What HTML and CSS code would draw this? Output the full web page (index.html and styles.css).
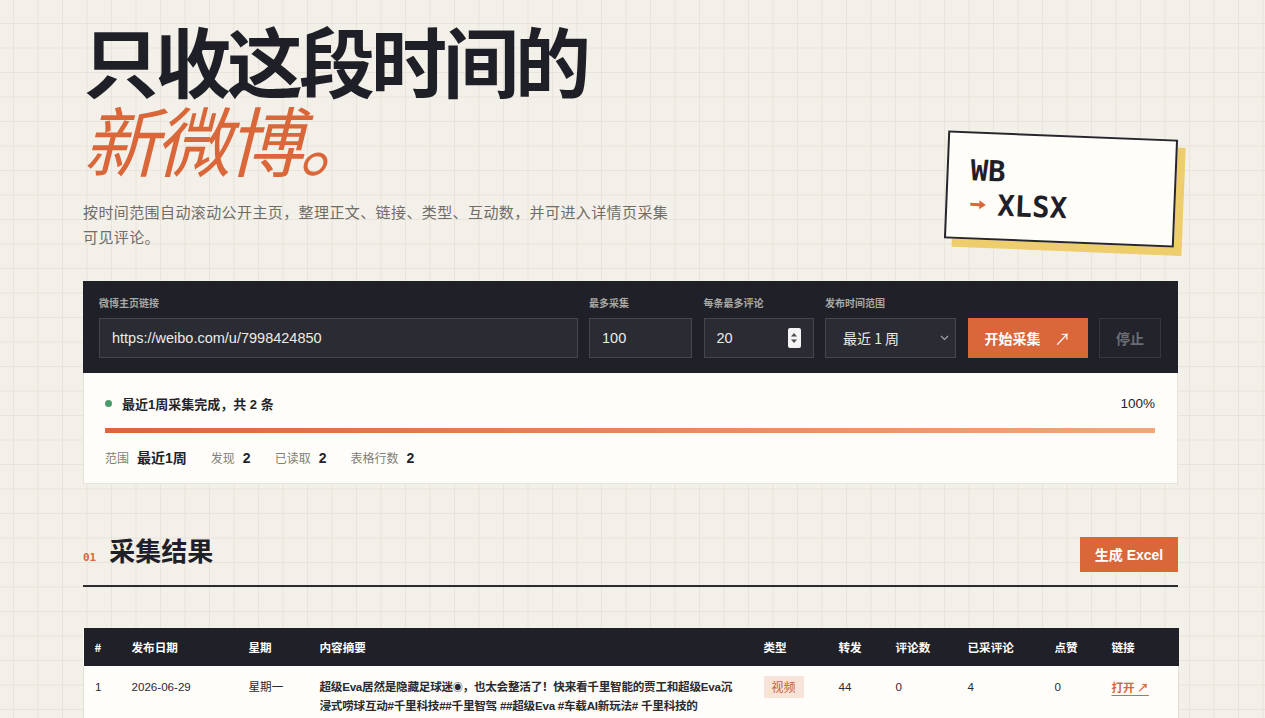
FILE: index.html
```html
<!DOCTYPE html>
<html lang="zh-CN">
<head>
<meta charset="utf-8">
<title>WB → XLSX 微博采集</title>
<link rel="stylesheet" href="styles.css">
</head>
<body>
<main class="page">
  <header class="hero">
    <div class="hero-text">
      <h1 class="title"><span class="title-main">只收这段时间的</span><span class="title-accent">新微博。</span></h1>
      <p class="lead">按时间范围自动滚动公开主页，整理正文、链接、类型、互动数，并可进入详情页采集可见评论。</p>
    </div>
    <div class="stamp">
      <div class="stamp-line">WB</div>
      <div class="stamp-line"><svg class="stamp-arrow" width="18" height="12" viewBox="0 0 18 12"><path d="M1 6 H14" stroke="#d9673a" stroke-width="3"/><path d="M10 1.5 L16.5 6 L10 10.5 Z" fill="#d9673a"/></svg>XLSX</div>
    </div>
  </header>

  <section class="controls">
    <div class="field">
      <label class="field-label">微博主页链接</label>
      <div class="input"><span class="input-value">https://weibo.com/u/7998424850</span></div>
    </div>
    <div class="field">
      <label class="field-label">最多采集</label>
      <div class="input"><span class="input-value">100</span></div>
    </div>
    <div class="field">
      <label class="field-label">每条最多评论</label>
      <div class="input input-number">
        <span class="input-value">20</span>
        <span class="spinner">
          <svg width="8" height="14" viewBox="0 0 8 14"><path d="M4 2 L7 5.5 H1 Z M4 12 L7 8.5 H1 Z" fill="#4a4a50"/></svg>
        </span>
      </div>
    </div>
    <div class="field">
      <label class="field-label">发布时间范围</label>
      <div class="input input-select">
        <span class="select-value">最近 1 周</span>
        <svg class="chevron" width="9" height="6" viewBox="0 0 9 6"><path d="M1 1 L4.5 4.5 L8 1" fill="none" stroke="#a9a8a3" stroke-width="1.1"/></svg>
      </div>
    </div>
    <button class="btn-start" type="button"><span>开始采集</span><span class="btn-arrow">↗</span></button>
    <button class="btn-stop" type="button">停止</button>
  </section>

  <section class="status">
    <div class="status-row">
      <div class="status-msg"><span class="dot"></span>最近1周采集完成，共 2 条</div>
      <div class="status-pct">100%</div>
    </div>
    <div class="progress"><div class="progress-fill" style="width:100%"></div></div>
    <div class="stats">
      <div class="stat"><span class="stat-label">范围</span><span class="stat-value">最近1周</span></div>
      <div class="stat"><span class="stat-label">发现</span><span class="stat-value">2</span></div>
      <div class="stat"><span class="stat-label">已读取</span><span class="stat-value">2</span></div>
      <div class="stat"><span class="stat-label">表格行数</span><span class="stat-value">2</span></div>
    </div>
  </section>

  <section class="results">
    <div class="section-head">
      <h2 class="section-title"><span class="section-num">01</span>采集结果</h2>
      <button class="btn-excel" type="button">生成 Excel</button>
    </div>
    <table class="table">
      <thead>
        <tr>
          <th class="c-idx">#</th>
          <th class="c-date">发布日期</th>
          <th class="c-week">星期</th>
          <th class="c-text">内容摘要</th>
          <th class="c-type">类型</th>
          <th class="c-repost">转发</th>
          <th class="c-comments">评论数</th>
          <th class="c-got">已采评论</th>
          <th class="c-like">点赞</th>
          <th class="c-link">链接</th>
        </tr>
      </thead>
      <tbody>
        <tr>
          <td>1</td>
          <td>2026-06-29</td>
          <td>星期一</td>
          <td class="summary">超级Eva居然是隐藏足球迷<span class="emo">◉</span>，也太会整活了！快来看千里智能的贾工和超级Eva沉浸式唠球互动#千里科技##千里智驾 ##超级Eva #车载AI新玩法# 千里科技的</td>
          <td><span class="tag">视频</span></td>
          <td>44</td>
          <td>0</td>
          <td>4</td>
          <td>0</td>
          <td><a class="open-link" href="#">打开 ↗</a></td>
        </tr>
      </tbody>
    </table>
  </section>
</main>
</body>
</html>
```

FILE: styles.css
```css
* { box-sizing: border-box; }

html, body { margin: 0; padding: 0; }

body {
  font-family: "Liberation Sans", "Noto Sans CJK SC", sans-serif;
  color: #1f2027;
  background-color: #f3f0e9;
  background-image:
    linear-gradient(#e8e4db 1px, transparent 1px),
    linear-gradient(90deg, #e8e4db 1px, transparent 1px);
  background-size: 24.5px 24.5px;
  background-position: 13px 23px;
  min-height: 718px;
}

.page {
  width: 1095px;
  margin-left: calc(50% - 549.5px);
  padding-top: 20px;
}

/* hero */
.hero {
  display: flex;
  justify-content: space-between;
  align-items: flex-start;
}

.title {
  margin: 0;
  display: flex;
  flex-direction: column;
  font-family: "Noto Sans CJK SC", sans-serif;
  font-size: 76px;
  line-height: 79px;
  letter-spacing: -4px;
}

.title-main {
  font-weight: 700;
  color: #1f2027;
}

.title-accent {
  font-weight: 400;
  font-style: italic;
  color: #d9673a;
}

.lead {
  margin: 21px 0 0;
  width: 600px;
  font-family: "Noto Sans CJK SC", sans-serif;
  font-size: 15px;
  line-height: 25px;
  letter-spacing: 0.4px;
  color: #6f6d68;
}

.stamp {
  margin-top: 115px;
  margin-right: 2px;
  width: 230px;
  height: 108px;
  padding: 20px 22px;
  background: #fffdf8;
  border: 2px solid #26262c;
  box-shadow: 8px 8px 0 #eecd6c;
  transform: rotate(2.3deg);
  font-family: "DejaVu Sans Mono", monospace;
  font-weight: 700;
  font-size: 29px;
  line-height: 34px;
  color: #1f2027;
}

.stamp-line {
  display: flex;
  align-items: center;
}

.stamp-arrow {
  margin-right: 10px;
}

/* controls */
.controls {
  margin-top: 32px;
  background: #1f2028;
  padding: 15px 17px 15px 16px;
  display: grid;
  grid-template-columns: 1fr 103px 110px 131px 120px 62px;
  column-gap: 11.5px;
  align-items: end;
}

.field {
  display: flex;
  flex-direction: column;
  gap: 8px;
}

.field-label {
  font-family: "Noto Sans CJK SC", sans-serif;
  font-size: 10px;
  line-height: 14px;
  font-weight: 700;
  color: #a9a8a3;
}

.input {
  height: 40px;
  background: #2a2b33;
  border: 1px solid #45464e;
  display: flex;
  align-items: center;
  padding: 0 12px;
  font-size: 14.5px;
  color: #ecebe6;
}

.input-number { justify-content: space-between; }

.spinner {
  width: 13px;
  height: 20px;
  background: #f4f4f4;
  border-radius: 2px;
  display: flex;
  align-items: center;
  justify-content: center;
}

.input-select {
  justify-content: space-between;
  padding: 0 6px 0 17px;
  font-family: "Noto Sans CJK SC", sans-serif;
  font-size: 14px;
}

.btn-start {
  height: 40px;
  border: none;
  background: #d9673a;
  color: #fff;
  font-family: "Noto Sans CJK SC", sans-serif;
  font-size: 14px;
  font-weight: 700;
  display: flex;
  align-items: center;
  justify-content: space-between;
  padding: 0 17px 0 17px;
  cursor: pointer;
}

.btn-arrow { font-weight: 400; font-size: 16px; }

.btn-stop {
  height: 40px;
  border: 1px solid #35363e;
  background: #22232b;
  color: #6c6d73;
  font-family: "Noto Sans CJK SC", sans-serif;
  font-size: 14px;
  font-weight: 700;
  padding: 0;
}

/* status */
.status {
  background: #fffdf9;
  border: 1px solid #e6e2d9;
  border-top: none;
  padding: 20px 22px 16px 21px;
}

.status-row {
  display: flex;
  justify-content: space-between;
  align-items: center;
  height: 20px;
}

.status-msg {
  display: flex;
  align-items: center;
  gap: 10px;
  font-family: "Liberation Sans", "Noto Sans CJK SC", sans-serif;
  font-weight: 700;
  font-size: 13px;
  color: #23232a;
}

.dot {
  width: 7px;
  height: 7px;
  border-radius: 50%;
  background: #4b9a6a;
}

.status-pct {
  font-size: 13.5px;
  font-weight: 500;
  color: #23232a;
}

.progress {
  margin-top: 15px;
  height: 5px;
  background: #f1e6dc;
}

.progress-fill {
  height: 100%;
  background: linear-gradient(90deg, #d9673a, #f0a878);
}

.stats {
  margin-top: 14px;
  display: flex;
  gap: 24px;
  height: 20px;
  align-items: center;
}

.stat {
  display: flex;
  align-items: baseline;
  gap: 8px;
}

.stat-label {
  font-family: "Noto Sans CJK SC", sans-serif;
  font-size: 12px;
  color: #807e78;
}

.stat-value {
  font-size: 14px;
  font-weight: 700;
  color: #23232a;
}

/* results */
.results { margin-top: 49px; }

.section-head {
  display: flex;
  justify-content: space-between;
  align-items: center;
  padding-bottom: 10px;
  border-bottom: 2px solid #2b2b31;
}

.section-title {
  margin: 0;
  display: flex;
  align-items: baseline;
  gap: 13px;
  font-family: "Noto Sans CJK SC", sans-serif;
  font-size: 26px;
  line-height: 34px;
  font-weight: 700;
  color: #1f2027;
}

.section-num {
  font-family: "DejaVu Sans Mono", monospace;
  font-size: 11px;
  font-weight: 700;
  color: #d9673a;
}

.btn-excel {
  height: 35px;
  width: 98px;
  border: none;
  background: #d9673a;
  color: #fff;
  font-family: "Liberation Sans", "Noto Sans CJK SC", sans-serif;
  font-size: 14px;
  font-weight: 700;
  padding: 0;
}

.table {
  margin-top: 41px;
  width: 100%;
  border-collapse: collapse;
  table-layout: fixed;
  font-family: "Liberation Sans", "Noto Sans CJK SC", sans-serif;
  font-size: 11.6px;
  background: #fffdf9;
}

.table th {
  background: #1f2028;
  color: #fff;
  font-weight: 700;
  text-align: left;
  height: 38px;
  padding: 0 11px;
  font-family: "Noto Sans CJK SC", sans-serif;
}

.c-idx { width: 37px; }
.c-date { width: 117px; }
.c-week { width: 71px; }
.c-text { width: 444px; }
.c-type { width: 75px; }
.c-repost { width: 57px; }
.c-comments { width: 72px; }
.c-got { width: 87px; }
.c-like { width: 57px; }
.c-link { width: 78px; }

.table td {
  vertical-align: top;
  padding: 12px 11px 14px;
  line-height: 18px;
  color: #2a2a30;
}

.table tbody tr { border-left: 1px solid #e2ded5; border-right: 1px solid #e2ded5; }

.summary {
  font-weight: 700;
  color: #1f2027;
  letter-spacing: -0.25px;
}

.emo { font-size: 10px; font-weight: 400; }

.tag {
  display: inline-block;
  margin-top: -2px;
  padding: 2px 8px;
  background: #f7e3d8;
  color: #c85e36;
  font-family: "Noto Sans CJK SC", sans-serif;
  font-size: 12px;
  line-height: 18px;
}

.open-link {
  color: #d9673a;
  font-weight: 700;
  text-decoration: underline;
  text-underline-offset: 3px;
  font-family: "Noto Sans CJK SC", sans-serif;
}
```
